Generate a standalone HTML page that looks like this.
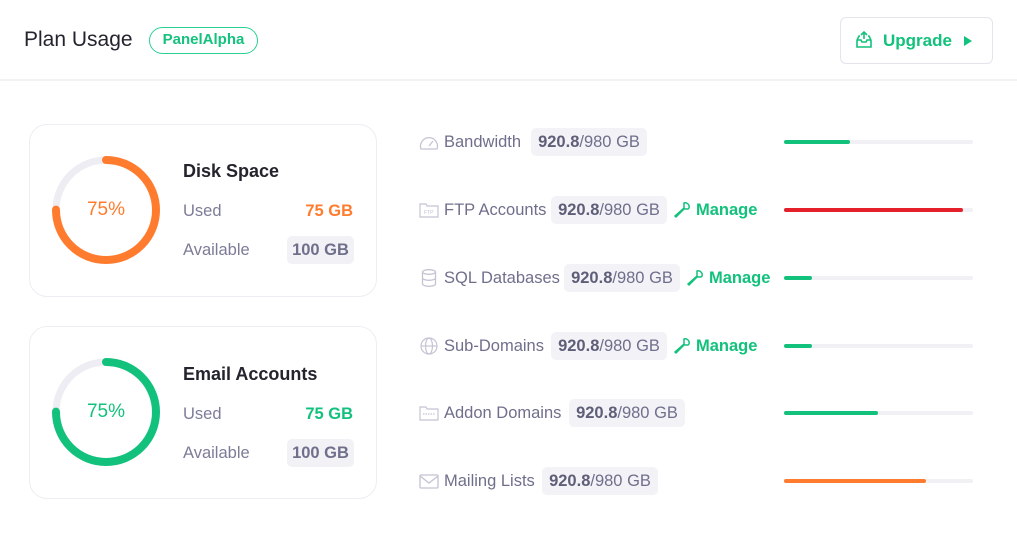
<!DOCTYPE html>
<html><head><meta charset="utf-8"><style>
*{margin:0;padding:0;box-sizing:border-box}
body{width:1017px;height:543px;background:#fff;font-family:"Liberation Sans",sans-serif;position:relative;overflow:hidden;color:#6f6f8c}
.a{position:absolute;white-space:nowrap}
.title{left:24px;top:28px;font-size:21px;color:#24242e}
.pill{left:149px;top:27px;width:109px;height:27px;border:1.5px solid #2bd191;border-radius:14px;color:#14c27e;font-weight:bold;font-size:15px;text-align:center;line-height:24px}
.hr{left:0;top:79px;width:1017px;height:2px;background:#f3f3f6}
.btn{left:840px;top:17px;width:153px;height:47px;border:1.5px solid #e4e4ee;border-radius:6px;color:#12c17c;font-weight:bold;font-size:17px}
.card{left:29px;width:348px;height:173px;border:1.5px solid #ededf3;border-radius:18px}
.ct{font-size:18px;font-weight:bold;color:#24242e}
.lbl{font-size:16.5px;color:#7c7c99}
.val{font-size:16.5px;font-weight:bold;text-align:right}
.gb{background:#f1f1f6;border-radius:5px;height:28px;line-height:28px;padding:0;color:#6f6f8c;width:67px;text-align:center}
.row{font-size:16.5px;color:#6f6f8c;line-height:28px;height:28px}
.bd{height:28px;line-height:28px;background:#f2f2f7;border-radius:5px;width:116px;text-align:center;font-size:16.5px;color:#6f6f8c}
.bd b{color:#5e5e78}
.mg{color:#12c17c;font-weight:bold;font-size:16.5px;line-height:28px}
.bar{left:784px;width:189px;height:4px;border-radius:2px;background:#f0f0f5}
.bar i{display:block;height:4px;border-radius:2px}
.pct{font-size:19px;width:112px;text-align:center}
</style></head><body>
<div class="a title">Plan Usage</div>
<div class="a pill">PanelAlpha</div>
<div class="a btn">
<svg class="a" style="left:13px;top:12px" width="20" height="20" viewBox="0 0 20 20" fill="none" stroke="#12c17c" stroke-width="1.6"><path d="M10 2v7M7 5l3-3 3 3M3 10h4l1 2h4l1-2h4M3 10l2-4h1M17 10l-2-4h-1M3 10v7h14v-7"/></svg>
<span class="a" style="left:42px;top:13px">Upgrade</span>
<svg class="a" style="left:123px;top:18px" width="8" height="10"><path d="M0 0L8 5L0 10z" fill="#12c17c"/></svg>
</div>
<div class="a hr"></div>

<div class="a card" style="top:124px"></div>
<svg class="a" style="left:50px;top:154px" width="112" height="112"><circle cx="56" cy="56" r="50" fill="none" stroke="#ededf3" stroke-width="7"/><circle cx="56" cy="56" r="50" fill="none" stroke="#ff7c2f" stroke-width="8" stroke-linecap="round" stroke-dasharray="235.6 400" transform="rotate(-90 56 56)"/></svg>
<div class="a pct" style="left:50px;top:199px;color:#ff7c2f">75%</div>
<div class="a ct" style="left:183px;top:161px">Disk Space</div>
<div class="a lbl" style="left:183px;top:202px">Used</div>
<div class="a val" style="left:250px;top:202px;width:103px;color:#ff7c2f">75 GB</div>
<div class="a lbl" style="left:183px;top:241px">Available</div>
<div class="a val gb" style="left:287px;top:236px">100 GB</div>

<div class="a card" style="top:326px"></div>
<svg class="a" style="left:50px;top:356px" width="112" height="112"><circle cx="56" cy="56" r="50" fill="none" stroke="#ededf3" stroke-width="7"/><circle cx="56" cy="56" r="50" fill="none" stroke="#12c17c" stroke-width="8" stroke-linecap="round" stroke-dasharray="235.6 400" transform="rotate(-90 56 56)"/></svg>
<div class="a pct" style="left:50px;top:401px;color:#12c17c">75%</div>
<div class="a ct" style="left:183px;top:364px">Email Accounts</div>
<div class="a lbl" style="left:183px;top:405px">Used</div>
<div class="a val" style="left:250px;top:405px;width:103px;color:#12c17c">75 GB</div>
<div class="a lbl" style="left:183px;top:444px">Available</div>
<div class="a val gb" style="left:287px;top:439px">100 GB</div>

<svg class="a" style="left:419px;top:133px" width="20" height="18" fill="none" stroke="#c4c4d4" stroke-width="1.3"><path d="M2 16A8.5 8.5 0 1 1 18 16Z"/><path d="M10 13l4-5"/></svg>
<div class="a row" style="left:444px;top:128px">Bandwidth</div>
<div class="a bd" style="left:531px;top:128px"><b>920.8</b>/980 GB</div>
<div class="a bar" style="top:140px"><i style="width:66px;background:#12c17c"></i></div>

<svg class="a" style="left:419px;top:202px" width="20" height="16" fill="none" stroke="#c4c4d4" stroke-width="1.2"><path d="M1 2h6l1 2h11v11H1z"/><text x="5" y="12" font-size="5" fill="#c4c4d4" stroke="none" font-family="Liberation Sans">FTP</text></svg>
<div class="a row" style="left:444px;top:196px">FTP Accounts</div>
<div class="a bd" style="left:551px;top:196px"><b>920.8</b>/980 GB</div>
<svg class="a" style="left:673px;top:201px" width="18" height="18" fill="none" stroke="#12c17c" stroke-width="1.5"><path d="M11 2a4 4 0 0 1 5 5l-1 1h-3l-1-1V4zM11 7L2 15l1 1 8-8"/></svg>
<div class="a mg" style="left:696px;top:196px">Manage</div>
<div class="a bar" style="top:208px"><i style="width:179px;background:#e5202a"></i></div>

<svg class="a" style="left:421px;top:269px" width="16" height="18" fill="none" stroke="#c4c4d4" stroke-width="1.3"><ellipse cx="8" cy="3" rx="6.5" ry="2.3"/><path d="M1.5 3v12c0 1.3 3 2.3 6.5 2.3s6.5-1 6.5-2.3V3M1.5 9c0 1.3 3 2.3 6.5 2.3S14.5 10.3 14.5 9"/></svg>
<div class="a row" style="left:444px;top:264px">SQL Databases</div>
<div class="a bd" style="left:564px;top:264px"><b>920.8</b>/980 GB</div>
<svg class="a" style="left:686px;top:269px" width="18" height="18" fill="none" stroke="#12c17c" stroke-width="1.5"><path d="M11 2a4 4 0 0 1 5 5l-1 1h-3l-1-1V4zM11 7L2 15l1 1 8-8"/></svg>
<div class="a mg" style="left:709px;top:264px">Manage</div>
<div class="a bar" style="top:276px"><i style="width:28px;background:#12c17c"></i></div>

<svg class="a" style="left:420px;top:337px" width="18" height="18" fill="none" stroke="#c4c4d4" stroke-width="1.2"><circle cx="9" cy="9" r="8"/><ellipse cx="9" cy="9" rx="3.5" ry="8"/><path d="M1 9h16"/></svg>
<div class="a row" style="left:444px;top:332px">Sub-Domains</div>
<div class="a bd" style="left:551px;top:332px"><b>920.8</b>/980 GB</div>
<svg class="a" style="left:673px;top:337px" width="18" height="18" fill="none" stroke="#12c17c" stroke-width="1.5"><path d="M11 2a4 4 0 0 1 5 5l-1 1h-3l-1-1V4zM11 7L2 15l1 1 8-8"/></svg>
<div class="a mg" style="left:696px;top:332px">Manage</div>
<div class="a bar" style="top:344px"><i style="width:28px;background:#12c17c"></i></div>

<svg class="a" style="left:419px;top:405px" width="20" height="16" fill="none" stroke="#c4c4d4" stroke-width="1.2"><path d="M1 2h6l1 2h11v11H1z"/><path d="M4 9h12" stroke-dasharray="1.5 1"/></svg>
<div class="a row" style="left:444px;top:399px">Addon Domains</div>
<div class="a bd" style="left:569px;top:399px"><b>920.8</b>/980 GB</div>
<div class="a bar" style="top:411px"><i style="width:94px;background:#12c17c"></i></div>

<svg class="a" style="left:419px;top:474px" width="20" height="15" fill="none" stroke="#c4c4d4" stroke-width="1.3"><rect x="1" y="1" width="18" height="13" rx="1"/><path d="M1 2l9 7 9-7"/></svg>
<div class="a row" style="left:444px;top:467px">Mailing Lists</div>
<div class="a bd" style="left:542px;top:467px"><b>920.8</b>/980 GB</div>
<div class="a bar" style="top:479px"><i style="width:142px;background:#ff7c2f"></i></div>
</body></html>
